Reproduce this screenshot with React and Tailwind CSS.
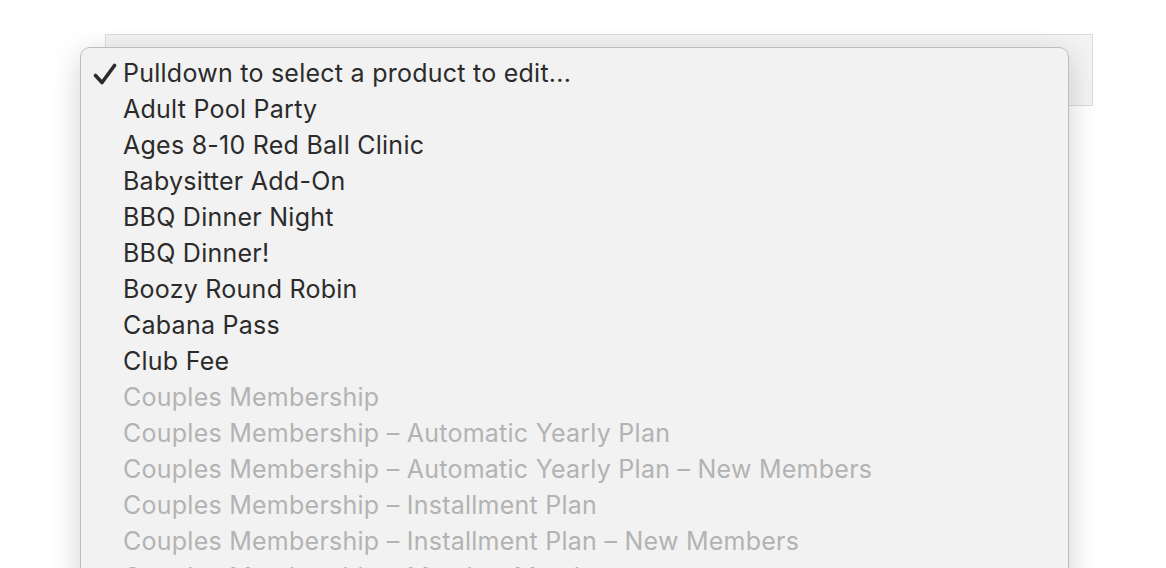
import React from "react"

const items = [
  { label: "Pulldown to select a product to edit...", checked: true },
  { label: "Adult Pool Party" },
  { label: "Ages 8-10 Red Ball Clinic" },
  { label: "Babysitter Add-On" },
  { label: "BBQ Dinner Night" },
  { label: "BBQ Dinner!" },
  { label: "Boozy Round Robin" },
  { label: "Cabana Pass" },
  { label: "Club Fee" },
  { label: "Couples Membership", disabled: true },
  { label: "Couples Membership – Automatic Yearly Plan", disabled: true },
  { label: "Couples Membership – Automatic Yearly Plan – New Members", disabled: true },
  { label: "Couples Membership – Installment Plan", disabled: true },
  { label: "Couples Membership – Installment Plan – New Members", disabled: true },
  { label: "Couples Membership – Member Match", disabled: true },
]

function Check() {
  return (
    <svg width="24" height="22" viewBox="0 0 24 22" className="text-[#2b2b2b]">
      <path d="M2.5 12.5 L9 19.5 L21.5 2.5" fill="none" stroke="currentColor" strokeWidth="3.6" strokeLinecap="round" strokeLinejoin="round" />
    </svg>
  )
}

export default function App() {
  return (
    <div className="relative h-[568px] w-full overflow-hidden bg-white font-['Inter',sans-serif]">
      <div className="ml-[105px] mt-[34px] h-[72px] w-[988px] border border-[#dcdcdc] bg-[#f3f3f3]" />
      <div className="absolute left-[80px] top-[47px] w-[989px] rounded-[10px] border border-[#bdbdbd] bg-[#f2f2f2] pt-[8px] pb-2 shadow-[0_8px_30px_rgba(0,0,0,0.18)]">
        {items.map((item) => (
          <div key={item.label} className="flex h-[36px] items-center">
            <div className="flex w-[42px] justify-end pr-[6px]">
              {item.checked ? <Check /> : null}
            </div>
            <span
              className={
                "whitespace-nowrap text-[25px] tracking-[0.25px] " +
                (item.disabled ? "text-[#b3b3b3]" : "text-[#2b2b2b]")
              }
            >
              {item.label}
            </span>
          </div>
        ))}
      </div>
    </div>
  )
}
